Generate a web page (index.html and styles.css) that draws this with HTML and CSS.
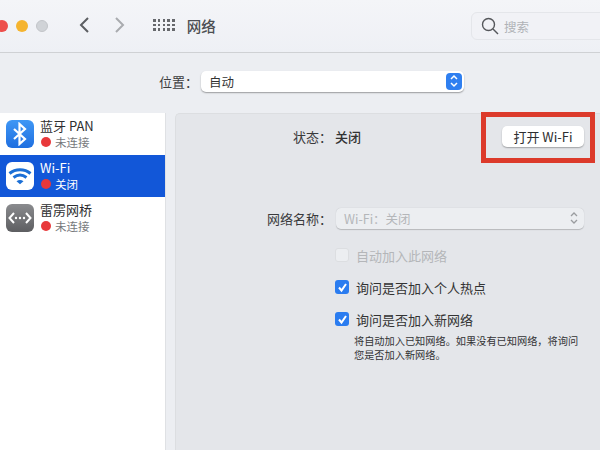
FILE: index.html
```html
<!DOCTYPE html>
<html lang="zh-CN">
<head>
  <meta charset="UTF-8" />
  <title>网络</title>
  <link rel="stylesheet" href="styles.css">
</head>
<body>
  <div class="window">
    <header class="toolbar">
      <div class="lights">
        <span class="light red"></span>
        <span class="light yellow"></span>
        <span class="light grey"></span>
      </div>
      <svg class="nav back" width="12" height="18" viewBox="0 0 12 18"><path d="M10 2 3 9l7 7" /></svg>
      <svg class="nav forward" width="12" height="18" viewBox="0 0 12 18"><path d="M2 2l7 7-7 7" /></svg>
      <div class="apps">
        <i></i><i></i><i></i><i></i><i></i><i></i><i></i><i></i><i></i><i></i><i></i><i></i><i></i><i></i><i></i>
      </div>
      <div class="title">网络</div>
      <div class="search">
        <svg width="18" height="18" viewBox="0 0 18 18"><circle cx="7.5" cy="7.5" r="6" /><path d="M12 12l5 5" /></svg>
        <span>搜索</span>
      </div>
    </header>

    <div class="location">
      <span class="location-label">位置：</span>
      <div class="popup">
        <span>自动</span>
        <span class="stepper">
          <svg width="10" height="14" viewBox="0 0 10 14"><path d="M2 5l3-3 3 3M2 9l3 3 3-3" /></svg>
        </span>
      </div>
    </div>

    <div class="main">
      <aside class="sidebar">
        <div class="service">
          <span class="icon bluetooth">
            <svg width="16" height="24" viewBox="0 0 16 24"><path d="M2 7l11 10-5.500 5V2L13 7 2 17" /></svg>
          </span>
          <div class="service-text">
            <div class="service-name">蓝牙 PAN</div>
            <div class="service-status"><span class="dot"></span>未连接</div>
          </div>
        </div>
        <div class="service selected">
          <span class="icon wifi">
            <svg width="24" height="20" viewBox="0 0 24 20"><path class="w1" d="M1.500 7.500c6-5 15-5 21 0" /><path class="w2" d="M5.500 11.500c4-3 9-3 13 0" /><path d="M8.500 15.200c2.300-1.500 4.700-1.500 7 0l-3.500 3z" class="w3" /></svg>
          </span>
          <div class="service-text">
            <div class="service-name">Wi-Fi</div>
            <div class="service-status"><span class="dot"></span>关闭</div>
          </div>
        </div>
        <div class="service">
          <span class="icon bridge">
            <svg width="24" height="14" viewBox="0 0 24 14"><path d="M6 2 1.500 7 6 12M18 2l4.500 5L18 12" /><circle class="pt" cx="8" cy="7" r="1.200" /><circle class="pt" cx="12" cy="7" r="1.200" /><circle class="pt" cx="16" cy="7" r="1.200" /></svg>
          </span>
          <div class="service-text">
            <div class="service-name">雷雳网桥</div>
            <div class="service-status"><span class="dot"></span>未连接</div>
          </div>
        </div>
      </aside>

      <section class="panel">
        <div class="status-row">
          <span class="label">状态：</span>
          <span class="status-value">关闭</span>
          <button class="wifi-btn">打开 Wi-Fi</button>
        </div>
        <div class="name-row">
          <span class="label">网络名称：</span>
          <div class="name-select">
            <span>Wi-Fi：关闭</span>
            <svg width="10" height="14" viewBox="0 0 10 14"><path d="M2 5l3-3 3 3M2 9l3 3 3-3" /></svg>
          </div>
        </div>
        <div class="options">
          <div class="option disabled"><span class="check"></span>自动加入此网络</div>
          <div class="option"><span class="check on"><svg width="11" height="11" viewBox="0 0 11 11"><path d="M2 5.500l2.500 3L9 2" /></svg></span>询问是否加入个人热点</div>
          <div class="option"><span class="check on"><svg width="11" height="11" viewBox="0 0 11 11"><path d="M2 5.500l2.500 3L9 2" /></svg></span>询问是否加入新网络</div>
          <p class="hint">将自动加入已知网络。如果没有已知网络，将询问<br>您是否加入新网络。</p>
        </div>
        <div class="highlight"></div>
      </section>
    </div>
  </div>
</body>
</html>
```

FILE: styles.css
```css
* {
  margin: 0;
  padding: 0;
  box-sizing: border-box;
}

html, body {
  width: 600px;
  height: 450px;
  overflow: hidden;
}

body {
  font-family: "Noto Sans CJK SC", "Liberation Sans", sans-serif;
  background: #eceef2;
  color: #2e2e30;
  font-size: 13px;
}

.window {
  height: 450px;
  display: flex;
  flex-direction: column;
}

.toolbar {
  height: 53px;
  display: flex;
  align-items: center;
  padding-bottom: 2px;
  background: linear-gradient(#f4f5f8, #eef0f5);
  border-bottom: 1px solid #cfd1d4;
  position: relative;
  flex: none;
}

.lights {
  display: flex;
  gap: 8px;
  margin-left: -4px;
  margin-top: 1px;
}

.light {
  width: 12px;
  height: 12px;
  border-radius: 50%;
}

.red { background: #ed4f4c; }
.yellow { background: #f5b42f; }
.grey { background: #d0d3d7; border: 1px solid #c2c5c9; }

.nav {
  fill: none;
  stroke-width: 2;
  flex: none;
}

.back { margin-left: 30px; stroke: #5c5e62; }
.forward { margin-left: 24px; stroke: #a9abaf; }

.apps {
  display: grid;
  grid-template-columns: repeat(5, 2.600px);
  gap: 2.200px;
  margin-left: 27px;
}

.apps i {
  width: 2.600px;
  height: 2.600px;
  background: #66686c;
}

.title {
  margin-left: 12px;
  font-size: 14.500px;
  font-weight: 500;
  color: #4c4e52;
}

.search {
  position: absolute;
  left: 471px;
  top: 12px;
  width: 140px;
  height: 28px;
  border: 1px solid #e4e6ea;
  border-radius: 6px;
  background: #f1f2f6;
  display: flex;
  align-items: center;
  gap: 5px;
  padding-left: 9px;
  color: #b0b2b6;
  font-size: 12.500px;
}

.search svg {
  fill: none;
  stroke: #55575b;
  stroke-width: 1.400;
}

.location {
  height: 60px;
  display: flex;
  align-items: center;
  padding-left: 159px;
  padding-bottom: 4px;
  flex: none;
}

.location-label {
  width: 42px;
  color: #3c3c3e;
}

.popup {
  width: 263px;
  height: 21px;
  background: #fff;
  border-radius: 5px;
  box-shadow: 0 1px 1.500px rgba(0, 0, 0, .35);
  display: flex;
  align-items: center;
  justify-content: space-between;
  padding: 0 2px 0 8px;
  color: #333;
  font-size: 12.500px;
}

.stepper {
  width: 16px;
  height: 17px;
  border-radius: 4px;
  background: #2f7ff0;
  display: flex;
  align-items: center;
  justify-content: center;
}

.stepper svg {
  fill: none;
  stroke: #fff;
  stroke-width: 1.500;
}

.main {
  flex: 1;
  display: flex;
  gap: 9px;
}

.sidebar {
  width: 166px;
  background: #fff;
  border-right: 1px solid #dfe1e4;
  flex: none;
}

.service {
  height: 42px;
  display: flex;
  align-items: center;
  padding-left: 6px;
  gap: 6px;
}

.service.selected {
  background: #1257d8;
  color: #fff;
}

.icon {
  width: 28px;
  height: 28px;
  border-radius: 6px;
  display: flex;
  align-items: center;
  justify-content: center;
  flex: none;
}

.bluetooth {
  background: linear-gradient(#3f97f5, #1f6fe0);
}

.bluetooth svg {
  fill: none;
  stroke: #fff;
  stroke-width: 2.200;
}

.wifi {
  background: #fff;
}

.wifi svg {
  fill: none;
  stroke: #1b6fd6;
  stroke-width: 3;
}

.wifi .w3 {
  fill: #1b6fd6;
  stroke: none;
}

.bridge {
  background: linear-gradient(#8a8b8e, #5d5e61);
}

.bridge svg {
  fill: none;
  stroke: #fff;
  stroke-width: 2;
}

.bridge .pt {
  fill: #fff;
  stroke: none;
}

.service-name {
  font-size: 13px;
  line-height: 16px;
  white-space: nowrap;
}

.service-status {
  display: flex;
  align-items: center;
  gap: 4px;
  font-size: 11.500px;
  line-height: 16px;
  color: #77797c;
  margin-left: 1px;
}

.selected .service-status {
  color: #fff;
}

.dot {
  width: 10px;
  height: 10px;
  border-radius: 50%;
  background: #e8383a;
}

.panel {
  flex: 1;
  background: #e4e6ea;
  border-top: 1px solid #dcdee1;
  border-left: 1px solid #dcdee1;
  border-top-left-radius: 5px;
  position: relative;
  padding-top: 11px;
}

.status-row {
  display: flex;
  align-items: center;
  height: 22px;
}

.label {
  width: 156px;
  text-align: right;
  color: #3a3a3c;
  flex: none;
}

.status-value {
  margin-left: 3px;
  font-weight: 500;
  color: #333;
}

.wifi-btn {
  margin-left: 141px;
  width: 82px;
  height: 21px;
  border: none;
  border-radius: 5px;
  background: #fff;
  box-shadow: 0 1px 1.500px rgba(0, 0, 0, .3);
  font: inherit;
  font-size: 13px;
  color: #2e2e30;
}

.name-row {
  display: flex;
  align-items: center;
  margin-top: 60px;
  height: 22px;
}

.name-select {
  margin-left: 4px;
  width: 248px;
  height: 21px;
  border-radius: 5px;
  background: #eceef1;
  box-shadow: 0 .5px 1px rgba(0, 0, 0, .2);
  display: flex;
  align-items: center;
  justify-content: space-between;
  padding: 0 5px 0 8px;
  color: #b4b6b9;
  font-size: 12.500px;
}

.name-select svg {
  fill: none;
  stroke: #9a9c9f;
  stroke-width: 1.300;
}

.options {
  margin: 10px 0 0 159px;
}

.option {
  display: flex;
  align-items: center;
  gap: 7px;
  height: 32px;
  font-size: 13px;
  color: #333;
}

.option.disabled {
  color: #b4b6b9;
}

.check {
  width: 14px;
  height: 14px;
  border-radius: 3px;
  background: #eceef1;
  border: 1px solid #dcdee1;
  display: flex;
  align-items: center;
  justify-content: center;
  flex: none;
}

.check.on {
  background: #2a7cf0;
  border: none;
}

.check svg {
  fill: none;
  stroke: #fff;
  stroke-width: 2;
}

.hint {
  font-size: 10.200px;
  line-height: 14px;
  color: #333335;
  margin: -1px 0 0 19px;
  white-space: nowrap;
}

.highlight {
  position: absolute;
  left: 305px;
  top: -2px;
  width: 114px;
  height: 51px;
  border: 5px solid #dc3a2b;
}
```
